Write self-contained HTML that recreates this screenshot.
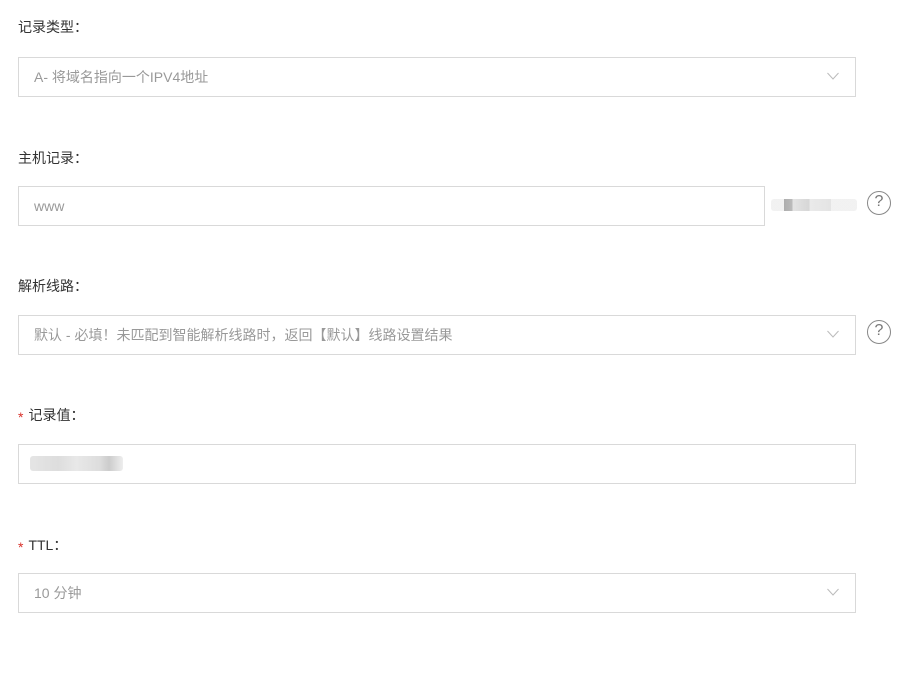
<!DOCTYPE html>
<html><head><meta charset="utf-8"><style>
*{margin:0;padding:0;box-sizing:border-box}
body{width:921px;height:687px;background:#fff;position:relative;font-family:"Liberation Sans","Noto Sans CJK SC",sans-serif;font-size:14px;color:#333}
.l{position:absolute;left:18px;font-size:14px;color:#333;line-height:20px}
.l .s{color:#d9312a;font-size:14px;margin-right:5px;position:relative;top:2px}
.b{position:absolute;left:18px;width:838px;height:40px;border:1px solid #d9d9d9;padding-left:15px;line-height:38px;color:#999;font-size:14px}
.ar{position:absolute;right:16px;top:14px;width:12px;height:8px}
.q{position:absolute;left:867px;width:24px;height:24px;border:1.8px solid #888;border-radius:50%;text-align:center;line-height:20px;color:#777;font-size:16px}
.px{position:absolute;height:8px}
</style></head><body>
<div class="l" style="top:17px">记录类型：</div>
<div class="b" style="top:57px">A- 将域名指向一个IPV4地址<svg class="ar" viewBox="0 0 12 8"><path d="M0.5 1L6 7L11.5 1" fill="none" stroke="#bbb" stroke-width="1"/></svg></div>
<div class="l" style="top:148px">主机记录：</div>
<div class="b" style="top:186px;width:747px">www</div>
<div class="px" style="left:771px;top:199px;width:86px;height:12px;background:linear-gradient(90deg,#eee 0,#eee 15%,#999 15%,#aaa 25%,#ddd 25%,#ccc 45%,#e5e5e5 45%,#ddd 70%,#eee 70%,#eee 100%);opacity:.8;border-radius:3px"></div>
<div class="q" style="top:191px">?</div>
<div class="l" style="top:276px">解析线路：</div>
<div class="b" style="top:315px">默认 - 必填！未匹配到智能解析线路时，返回【默认】线路设置结果<svg class="ar" viewBox="0 0 12 8"><path d="M0.5 1L6 7L11.5 1" fill="none" stroke="#bbb" stroke-width="1"/></svg></div>
<div class="q" style="top:320px">?</div>
<div class="l" style="top:405px"><span class="s">*</span>记录值：</div>
<div class="b" style="top:444px"></div>
<div class="px" style="left:30px;top:456px;width:93px;height:15px;background:linear-gradient(90deg,#e5e5e5 0,#ddd 30%,#e8e8e8 50%,#ddd 75%,#ccc 85%,#eee 100%);border-radius:3px"></div>
<div class="l" style="top:535px"><span class="s">*</span>TTL：</div>
<div class="b" style="top:573px">10 分钟<svg class="ar" viewBox="0 0 12 8"><path d="M0.5 1L6 7L11.5 1" fill="none" stroke="#bbb" stroke-width="1"/></svg></div>
</body></html>
